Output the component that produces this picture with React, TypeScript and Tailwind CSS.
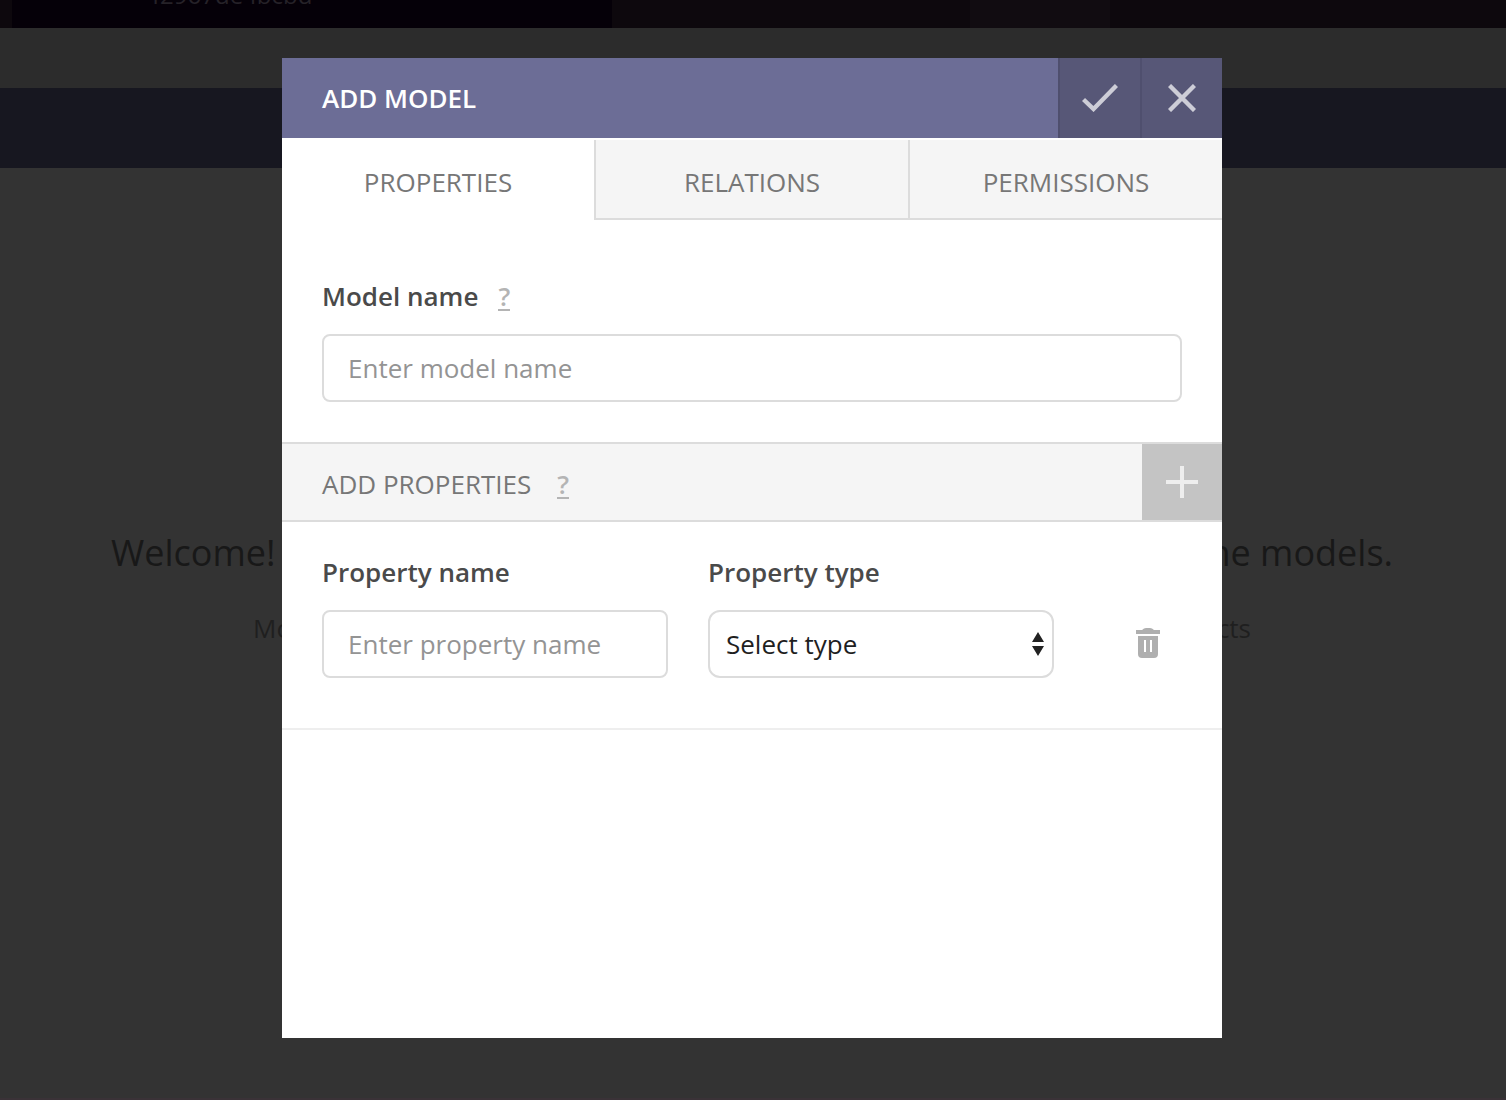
import React from "react";

function Help({ label }: { label: string }) {
  return (
    <a
      href="#help"
      aria-label={label}
      className="mt-0.5 border-b-2 border-[#b4b4b4] text-[26px] leading-[25px] font-semibold text-[#b4b4b4]"
    >
      ?
    </a>
  );
}

function Backdrop() {
  return (
    <div aria-hidden="true" className="flex min-h-screen flex-col border-b-2 border-[#3a3237] bg-[#333333]">
      <div className="flex h-7 overflow-hidden bg-[#0d080d] pl-3">
        <div className="flex w-[600px] items-end bg-[#050008] pl-[140px]">
          <span className="mb-[17px] text-2xl font-normal text-[#262228]">f2967de4bcbd</span>
        </div>
        <div className="w-[358px]" />
        <div className="w-[140px] bg-[#110c11]" />
      </div>
      <div className="h-15 bg-[#2c2c2c]" />
      <div className="h-20 bg-[#171720]" />
      <div className="mt-[360px] flex justify-between pr-[113px] pl-[111px] text-4xl leading-[50px] text-[#181818]">
        <span>Welcome!</span>
        <span>some models.</span>
      </div>
      <div className="mt-[32px] flex justify-between pr-[255px] pl-[253px] text-[26px] leading-9 text-[#1f1f1f]">
        <span>Mo</span>
        <span>cts</span>
      </div>
    </div>
  );
}

const tabs = ["PROPERTIES", "RELATIONS", "PERMISSIONS"];

export default function App() {
  return (
    <div className="relative min-h-screen font-['Open_Sans',sans-serif] text-[26px]">
      <Backdrop />
      <div className="absolute inset-0 flex items-start justify-center pt-[58px]">
        <section
          role="dialog"
          aria-labelledby="dialog-title"
          className="mr-0.5 min-h-[980px] w-full max-w-[940px] bg-white"
        >
          <header className="flex h-20 items-stretch bg-[#6c6d96]">
            <h1 id="dialog-title" className="flex-1 self-center pl-10 font-semibold text-white">
              ADD MODEL
            </h1>
            <button
              aria-label="Save"
              className="flex w-[82px] items-center justify-center border-l-2 border-[#4f4f6e] bg-[#575777]"
            >
              <svg width="36" height="28" viewBox="0 0 36 28" fill="none" stroke="#cdcdd7" strokeWidth="4.4">
                <path d="M1.5 15.5 11.5 25 34.5 1.5" />
              </svg>
            </button>
            <button
              aria-label="Close"
              className="flex w-[82px] items-center justify-center border-l-2 border-[#4f4f6e] bg-[#575777]"
            >
              <svg width="28" height="28" viewBox="0 0 28 28" stroke="#cdcdd7" strokeWidth="4.4">
                <path d="M1.5 1.5 26.5 26.5M26.5 1.5 1.5 26.5" />
              </svg>
            </button>
          </header>

          <div role="tablist" className="grid h-[82px] grid-cols-[312fr_314fr_314fr] pt-0.5">
            {tabs.map((t, i) => (
              <button
                key={t}
                role="tab"
                aria-selected={i === 0}
                className={
                  "border-b-2 pt-[6px] text-[#777777] " +
                  (i === 0 ? "border-white bg-white" : "border-l-2 border-[#dcdcdc] bg-[#f5f5f5]")
                }
              >
                {t}
              </button>
            ))}
          </div>

          <div className="px-10 pt-[58px] pb-10">
            <div className="flex items-center gap-5">
              <label htmlFor="model-name" className="leading-9 font-semibold text-[#4a4a4a]">
                Model name
              </label>
              <Help label="About the model name" />
            </div>
            <input
              id="model-name"
              placeholder="Enter model name"
              className="mt-5 block h-[68px] w-full rounded-lg border-2 border-[#dcdcdc] bg-white px-6 placeholder:text-[#949494]"
            />
          </div>

          <div className="flex h-20 items-stretch border-y-2 border-[#dcdcdc] bg-[#f5f5f5] pl-10">
            <div className="flex flex-1 items-center gap-[26px] pt-1">
              <h2 className="text-[#777777]">ADD PROPERTIES</h2>
              <Help label="About properties" />
            </div>
            <button aria-label="Add property" className="flex w-20 items-center justify-center bg-[#c4c4c4]">
              <svg width="32" height="32" viewBox="0 0 32 32" fill="#eeeeee">
                <path d="M14 0h4v14h14v4H18v14h-4V18H0v-4h14z" />
              </svg>
            </button>
          </div>

          <div className="flex gap-10 border-b-2 border-[#eeeeee] px-10 pt-8 pb-[50px]">
            <div className="flex-1">
              <label htmlFor="property-name" className="block leading-9 font-semibold text-[#4a4a4a]">
                Property name
              </label>
              <input
                id="property-name"
                placeholder="Enter property name"
                className="mt-5 block h-[68px] w-full rounded-lg border-2 border-[#dcdcdc] bg-white px-6 placeholder:text-[#949494]"
              />
            </div>
            <div className="flex-1">
              <label htmlFor="property-type" className="block leading-9 font-semibold text-[#4a4a4a]">
                Property type
              </label>
              <div className="relative mt-5">
                <select
                  id="property-type"
                  className="block h-[68px] w-full appearance-none rounded-xl border-2 border-[#dcdcdc] bg-white px-4 text-[#1f1f1f]"
                >
                  <option>Select type</option>
                </select>
                <svg
                  className="pointer-events-none absolute top-[22px] right-2.5"
                  width="12"
                  height="24"
                  viewBox="0 0 12 24"
                  fill="#222222"
                >
                  <path d="M6 0 12 10H0zM6 24 0 14h12z" />
                </svg>
              </div>
            </div>
            <div className="flex w-[88px] items-end justify-end pr-[22px] pb-5">
              <button aria-label="Delete property">
                <svg className="block" width="24" height="30" viewBox="0 0 24 30" fill="#afafaf">
                  <path d="M0 2h6q2-2 4-2h4q2 0 4 2h6v4H0z" />
                  <path
                    fillRule="evenodd"
                    d="M2 8h20v18q0 4-4 4H6q-4 0-4-4zM8 12v12h2V12zM14 12v12h2V12z"
                  />
                </svg>
              </button>
            </div>
          </div>
        </section>
      </div>
    </div>
  );
}
